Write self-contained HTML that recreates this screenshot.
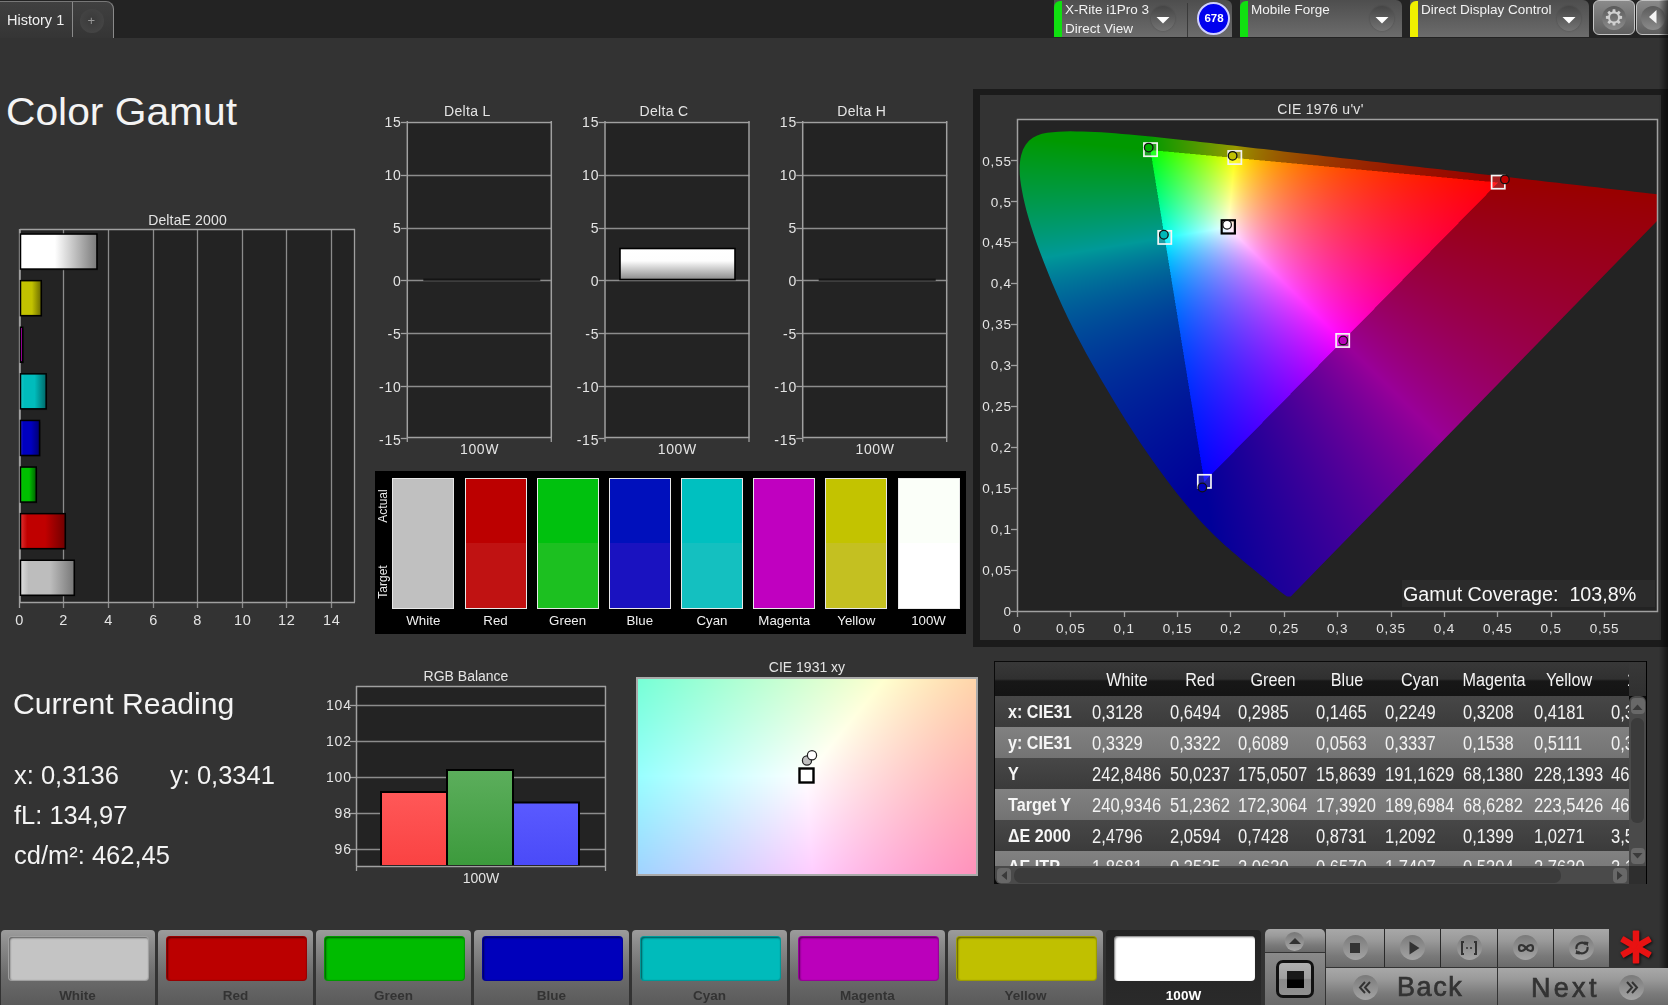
<!DOCTYPE html>
<html><head><meta charset="utf-8">
<style>
*{margin:0;padding:0;box-sizing:border-box}
html,body{width:1668px;height:1005px;overflow:hidden;background:#333;font-family:"Liberation Sans",sans-serif;color:#e8e8e8}
.a{position:absolute}
svg text{font-family:"Liberation Sans",sans-serif}
</style></head><body>
<div class="a" style="left:0;top:0;width:1668px;height:38px;background:#232323"></div>
<div class="a" style="left:6px;top:90px;font-size:39px;color:#f4f4f4;transform:scaleX(1.045);transform-origin:0 0">Color Gamut</div>
<div class="a" style="left:375px;top:470.5px;width:591px;height:163px;background:#000"></div>
<div class="a" style="left:973px;top:89px;width:695px;height:558px;background:#1b1b1b"></div>
<div class="a" style="left:980px;top:95px;width:681px;height:545px;background:#333"></div>
<div class="a" style="left:1018px;top:120px;width:639px;height:491px;background:#232323"></div>
<div class="a" style="left:636px;top:677px;width:342px;height:199px;background:#aaa"></div>
<svg id="fb1" class="a" style="left:0;top:0" width="1668" height="640"><defs><linearGradient id="fbv" x1="0" y1="0" x2="0" y2="1"><stop offset="0" stop-color="#009a10"/><stop offset="0.25" stop-color="#009a60"/><stop offset="0.55" stop-color="#004a9a"/><stop offset="1" stop-color="#2000a0"/></linearGradient><linearGradient id="fbh" x1="0" y1="0" x2="1" y2="0"><stop offset="0.4" stop-color="#a00090" stop-opacity="0"/><stop offset="0.7" stop-color="#9a0090" stop-opacity="0.8"/><stop offset="1" stop-color="#a00010"/></linearGradient><radialGradient id="fbw" gradientUnits="userSpaceOnUse" cx="1228.2" cy="227.3" r="330"><stop offset="0" stop-color="#fff"/><stop offset="1" stop-color="#fff" stop-opacity="0"/></radialGradient><linearGradient id="fbt" gradientUnits="userSpaceOnUse" x1="1150.4" y1="150.1" x2="1498.1" y2="182.5"><stop offset="0" stop-color="#00ff30"/><stop offset="0.3" stop-color="#ffff00"/><stop offset="1" stop-color="#ff0010"/></linearGradient><linearGradient id="fbb" gradientUnits="userSpaceOnUse" x1="1228.2" y1="227.3" x2="1204.3" y2="481.8"><stop offset="0" stop-color="#ff00ff" stop-opacity="0"/><stop offset="1" stop-color="#1010ff"/></linearGradient></defs><polygon points="1291.2,597.7 1286.7,597.6 1282.8,595.0 1279.7,592.7 1276.7,590.3 1273.2,587.3 1269.0,583.9 1266.0,581.3 1262.7,578.5 1258.9,575.4 1254.7,571.9 1250.1,568.2 1245.1,564.1 1239.8,559.6 1234.0,554.7 1230.9,552.1 1227.7,549.2 1224.3,546.3 1220.9,543.1 1217.4,539.8 1213.6,536.3 1209.9,532.6 1205.9,528.6 1201.8,524.2 1197.4,519.5 1192.7,514.1 1187.6,508.2 1182.2,501.8 1176.7,494.9 1170.8,487.4 1164.8,479.5 1158.8,471.3 1152.5,462.5 1146.0,453.3 1139.4,443.6 1132.7,433.4 1125.9,422.8 1119.1,411.8 1112.2,400.6 1105.4,389.2 1098.6,377.6 1091.8,365.8 1085.2,354.0 1078.8,342.1 1072.6,330.3 1066.9,318.5 1061.4,306.9 1056.3,295.6 1051.5,284.5 1047.1,273.7 1042.9,263.3 1039.1,253.3 1035.6,243.7 1032.5,234.6 1029.7,226.1 1027.2,217.9 1025.1,210.4 1023.4,203.3 1021.9,196.8 1020.7,190.6 1019.8,184.8 1019.0,179.6 1018.6,174.7 1018.5,170.1 1018.5,165.9 1018.8,161.9 1019.2,158.3 1020.0,155.0 1021.9,149.0 1024.7,144.0 1028.1,139.9 1032.2,136.7 1036.7,134.4 1041.7,132.7 1047.0,131.6 1052.5,131.0 1058.4,130.5 1064.4,130.3 1070.5,130.1 1076.5,130.2 1082.5,130.3 1088.7,130.5 1095.1,130.7 1101.5,131.1 1108.3,131.5 1115.1,132.0 1122.3,132.7 1129.6,133.3 1137.3,134.0 1145.3,134.8 1153.5,135.6 1157.8,136.1 1162.2,136.5 1166.6,137.0 1171.1,137.5 1175.7,138.0 1180.4,138.5 1185.2,139.1 1190.1,139.6 1195.2,140.1 1200.3,140.7 1205.5,141.3 1210.9,141.9 1216.3,142.5 1221.9,143.2 1227.5,143.8 1233.3,144.4 1239.1,145.1 1245.1,145.8 1251.2,146.5 1257.4,147.2 1263.8,147.9 1270.2,148.7 1276.7,149.4 1283.4,150.2 1290.2,151.0 1297.0,151.8 1304.1,152.5 1311.1,153.3 1318.2,154.2 1325.5,155.1 1332.9,155.9 1340.3,156.7 1347.8,157.6 1355.5,158.4 1363.1,159.3 1370.9,160.2 1378.7,161.1 1386.5,162.0 1394.4,162.9 1402.2,163.8 1409.9,164.7 1417.6,165.6 1425.2,166.5 1432.8,167.4 1440.3,168.2 1447.7,169.1 1455.2,169.9 1462.7,170.8 1470.0,171.6 1477.4,172.4 1484.6,173.3 1491.5,174.1 1498.3,174.8 1505.0,175.6 1511.5,176.4 1517.8,177.0 1524.0,177.8 1530.0,178.5 1535.9,179.2 1541.7,179.8 1547.2,180.5 1552.6,181.1 1557.8,181.6 1562.8,182.2 1567.6,182.8 1572.3,183.3 1576.8,183.8 1581.2,184.3 1589.5,185.3 1597.2,186.1 1604.3,187.0 1611.1,187.8 1617.5,188.5 1623.6,189.2 1629.2,189.8 1634.4,190.5 1639.4,191.1 1643.9,191.5 1650.0,192.3 1655.0,192.9 1659.4,193.3 1664.3,193.9 1669.0,194.4 1673.7,195.0 1678.0,195.5 1682.3,196.0" fill="url(#fbv)"/><polygon points="1291.2,597.7 1286.7,597.6 1282.8,595.0 1279.7,592.7 1276.7,590.3 1273.2,587.3 1269.0,583.9 1266.0,581.3 1262.7,578.5 1258.9,575.4 1254.7,571.9 1250.1,568.2 1245.1,564.1 1239.8,559.6 1234.0,554.7 1230.9,552.1 1227.7,549.2 1224.3,546.3 1220.9,543.1 1217.4,539.8 1213.6,536.3 1209.9,532.6 1205.9,528.6 1201.8,524.2 1197.4,519.5 1192.7,514.1 1187.6,508.2 1182.2,501.8 1176.7,494.9 1170.8,487.4 1164.8,479.5 1158.8,471.3 1152.5,462.5 1146.0,453.3 1139.4,443.6 1132.7,433.4 1125.9,422.8 1119.1,411.8 1112.2,400.6 1105.4,389.2 1098.6,377.6 1091.8,365.8 1085.2,354.0 1078.8,342.1 1072.6,330.3 1066.9,318.5 1061.4,306.9 1056.3,295.6 1051.5,284.5 1047.1,273.7 1042.9,263.3 1039.1,253.3 1035.6,243.7 1032.5,234.6 1029.7,226.1 1027.2,217.9 1025.1,210.4 1023.4,203.3 1021.9,196.8 1020.7,190.6 1019.8,184.8 1019.0,179.6 1018.6,174.7 1018.5,170.1 1018.5,165.9 1018.8,161.9 1019.2,158.3 1020.0,155.0 1021.9,149.0 1024.7,144.0 1028.1,139.9 1032.2,136.7 1036.7,134.4 1041.7,132.7 1047.0,131.6 1052.5,131.0 1058.4,130.5 1064.4,130.3 1070.5,130.1 1076.5,130.2 1082.5,130.3 1088.7,130.5 1095.1,130.7 1101.5,131.1 1108.3,131.5 1115.1,132.0 1122.3,132.7 1129.6,133.3 1137.3,134.0 1145.3,134.8 1153.5,135.6 1157.8,136.1 1162.2,136.5 1166.6,137.0 1171.1,137.5 1175.7,138.0 1180.4,138.5 1185.2,139.1 1190.1,139.6 1195.2,140.1 1200.3,140.7 1205.5,141.3 1210.9,141.9 1216.3,142.5 1221.9,143.2 1227.5,143.8 1233.3,144.4 1239.1,145.1 1245.1,145.8 1251.2,146.5 1257.4,147.2 1263.8,147.9 1270.2,148.7 1276.7,149.4 1283.4,150.2 1290.2,151.0 1297.0,151.8 1304.1,152.5 1311.1,153.3 1318.2,154.2 1325.5,155.1 1332.9,155.9 1340.3,156.7 1347.8,157.6 1355.5,158.4 1363.1,159.3 1370.9,160.2 1378.7,161.1 1386.5,162.0 1394.4,162.9 1402.2,163.8 1409.9,164.7 1417.6,165.6 1425.2,166.5 1432.8,167.4 1440.3,168.2 1447.7,169.1 1455.2,169.9 1462.7,170.8 1470.0,171.6 1477.4,172.4 1484.6,173.3 1491.5,174.1 1498.3,174.8 1505.0,175.6 1511.5,176.4 1517.8,177.0 1524.0,177.8 1530.0,178.5 1535.9,179.2 1541.7,179.8 1547.2,180.5 1552.6,181.1 1557.8,181.6 1562.8,182.2 1567.6,182.8 1572.3,183.3 1576.8,183.8 1581.2,184.3 1589.5,185.3 1597.2,186.1 1604.3,187.0 1611.1,187.8 1617.5,188.5 1623.6,189.2 1629.2,189.8 1634.4,190.5 1639.4,191.1 1643.9,191.5 1650.0,192.3 1655.0,192.9 1659.4,193.3 1664.3,193.9 1669.0,194.4 1673.7,195.0 1678.0,195.5 1682.3,196.0" fill="url(#fbh)"/><polygon points="1498.1,182.5 1150.4,150.1 1204.3,481.8" fill="url(#fbt)"/><polygon points="1498.1,182.5 1150.4,150.1 1204.3,481.8" fill="url(#fbb)"/><polygon points="1498.1,182.5 1150.4,150.1 1204.3,481.8" fill="url(#fbw)"/></svg><div class="a" style="left:638px;top:679px;width:338px;height:195px;background:linear-gradient(135deg,#80ffc8 0%,#e8fff8 45%,#ffe8f0 60%,#ff90c0 100%)"></div><div class="a" style="left:638px;top:679px;width:338px;height:195px;background:linear-gradient(45deg,rgba(168,200,255,.9) 0%,rgba(255,255,255,0) 45%,rgba(255,255,255,0) 60%,rgba(255,230,170,.9) 100%)"></div>

<canvas id="cie" class="a" style="left:1018px;top:120px" width="639" height="491"></canvas>
<script>
(function(){
var L=[[1290.78, 596.56], [1287.01, 596.45], [1283.5, 594.07], [1280.45, 591.73], [1277.48, 589.37], [1273.97, 586.42], [1269.82, 582.99], [1266.83, 580.37], [1263.5, 577.56], [1259.66, 574.45], [1255.5, 571.01], [1250.9, 567.23], [1245.89, 563.14], [1240.56, 558.72], [1234.8, 553.8], [1231.72, 551.19], [1228.52, 548.32], [1225.11, 545.38], [1221.71, 542.2], [1218.19, 538.92], [1214.47, 535.41], [1210.75, 531.73], [1206.81, 527.73], [1202.66, 523.4], [1198.3, 518.66], [1193.61, 513.35], [1188.5, 507.46], [1183.18, 501.08], [1177.64, 494.13], [1171.78, 486.68], [1165.81, 478.82], [1159.73, 470.55], [1153.44, 461.79], [1146.94, 452.62], [1140.44, 442.97], [1133.72, 432.73], [1126.9, 422.17], [1120.08, 411.2], [1113.25, 399.97], [1106.42, 388.59], [1099.59, 376.95], [1092.88, 365.24], [1086.26, 353.45], [1079.87, 341.58], [1073.69, 329.71], [1067.93, 318.01], [1062.5, 306.39], [1057.38, 295.09], [1052.59, 284.05], [1048.22, 273.24], [1044.06, 262.84], [1040.22, 252.85], [1036.71, 243.28], [1033.62, 234.2], [1030.85, 225.7], [1028.4, 217.6], [1026.27, 210.1], [1024.57, 203.07], [1023.09, 196.55], [1021.92, 190.35], [1020.96, 184.64], [1020.22, 179.44], [1019.8, 174.59], [1019.69, 170.13], [1019.69, 165.93], [1020.01, 162.07], [1020.42, 158.54], [1021.15, 155.3], [1023.01, 149.47], [1025.68, 144.67], [1028.94, 140.76], [1032.8, 137.71], [1037.22, 135.51], [1041.98, 133.84], [1047.18, 132.8], [1052.67, 132.16], [1058.49, 131.67], [1064.43, 131.5], [1070.49, 131.34], [1076.44, 131.42], [1082.52, 131.51], [1088.7, 131.67], [1095.08, 131.91], [1101.47, 132.32], [1108.19, 132.73], [1115.01, 133.22], [1122.15, 133.88], [1129.52, 134.53], [1137.2, 135.19], [1145.19, 136.01], [1153.41, 136.83], [1157.68, 137.32], [1162.06, 137.73], [1166.43, 138.22], [1171.02, 138.71], [1175.61, 139.2], [1180.3, 139.7], [1185.11, 140.27], [1190.02, 140.76], [1195.03, 141.34], [1200.16, 141.91], [1205.39, 142.48], [1210.72, 143.06], [1216.16, 143.71], [1221.72, 144.37], [1227.38, 144.94], [1233.13, 145.6], [1239.01, 146.34], [1245.0, 146.99], [1251.07, 147.65], [1257.26, 148.39], [1263.67, 149.12], [1270.07, 149.86], [1276.58, 150.6], [1283.31, 151.42], [1290.04, 152.16], [1296.87, 152.98], [1303.92, 153.71], [1310.96, 154.53], [1318.11, 155.35], [1325.37, 156.26], [1332.74, 157.08], [1340.21, 157.89], [1347.68, 158.8], [1355.37, 159.62], [1362.94, 160.52], [1370.74, 161.42], [1378.53, 162.32], [1386.32, 163.22], [1394.22, 164.13], [1402.02, 165.03], [1409.81, 165.93], [1417.5, 166.75], [1425.07, 167.65], [1432.65, 168.55], [1440.13, 169.37], [1447.6, 170.27], [1455.07, 171.09], [1462.54, 172.0], [1469.91, 172.82], [1477.28, 173.64], [1484.43, 174.45], [1491.37, 175.28], [1498.2, 176.01], [1504.81, 176.83], [1511.34, 177.57], [1517.63, 178.23], [1523.81, 178.96], [1529.9, 179.7], [1535.78, 180.36], [1541.54, 181.01], [1547.09, 181.67], [1552.44, 182.24], [1557.66, 182.82], [1562.67, 183.39], [1567.47, 183.96], [1572.18, 184.54], [1576.66, 185.03], [1581.04, 185.52], [1589.37, 186.51], [1597.05, 187.33], [1604.2, 188.15], [1610.92, 188.96], [1617.34, 189.7], [1623.42, 190.36], [1629.07, 191.01], [1634.3, 191.67], [1639.22, 192.25], [1643.81, 192.74], [1649.89, 193.47], [1654.91, 194.05], [1659.28, 194.54], [1664.2, 195.11], [1668.89, 195.61], [1673.58, 196.18], [1677.86, 196.67], [1681.14, 196.37]];
var c=document.getElementById('cie');var ctx=c.getContext('2d');
var W=c.width,H=c.height,OX=1018,OY=120;
var CX0=1017,CY0=611.2,KU=1067.5,KV=819.8;
var off=document.createElement('canvas');off.width=W;off.height=H;
var oc=off.getContext('2d');var img=oc.createImageData(W,H);var d=img.data;
function g(v){v=Math.max(0,Math.min(1,v));return v<=0.0031308?12.92*v:1.055*Math.pow(v,1/2.4)-0.055;}function GAMMA(v){return Math.pow(v,0.9);}
var SS=[0.25,0.75];
for(var py=0;py<H;py++){for(var px=0;px<W;px++){
 var R=0,G2=0,B2=0;
 for(var sy=0;sy<2;sy++){for(var sx=0;sx<2;sx++){
 var u=(OX+px+SS[sx]-CX0)/KU, v=(CY0-(OY+py+SS[sy]))/KV;
 if(v<0.001)v=0.001;
 var den=6*u-16*v+12; var x=9*u/den, y=4*v/den;
 var X=x/y, Y=1, Z=(1-x-y)/y;
 var r= 3.2406*X-1.5372*Y-0.4986*Z;
 var gg=-0.9689*X+1.8758*Y+0.0415*Z;
 var b= 0.0557*X-0.2040*Y+1.0570*Z;
 var inside=(r>=0&&gg>=0&&b>=0);
 r=Math.max(r,0);gg=Math.max(gg,0);b=Math.max(b,0);
 var m=Math.max(r,gg,b)||1; r/=m;gg/=m;b/=m;
 r=GAMMA(r);gg=GAMMA(gg);b=GAMMA(b);
 var f=inside?1:0.6;
 R+=r*f;G2+=gg*f;B2+=b*f;
 }}
 var i=(py*W+px)*4;
 d[i]=R*63.75;d[i+1]=G2*63.75;d[i+2]=B2*63.75;d[i+3]=255;
}}
oc.putImageData(img,0,0);
ctx.beginPath();
for(var k=0;k<L.length;k++){var X=L[k][0]-OX,Y=L[k][1]-OY; if(k==0)ctx.moveTo(X,Y);else ctx.lineTo(X,Y);}
ctx.closePath();ctx.clip();
ctx.drawImage(off,0,0);
var fb=document.getElementById('fb1'); if(fb) fb.style.display='none';
})();
</script>

<canvas id="xy" class="a" style="left:638px;top:679px" width="338" height="195"></canvas>
<script>
(function(){
var c=document.getElementById('xy');var ctx=c.getContext('2d');
var W=c.width,H=c.height;var img=ctx.createImageData(W,H);var d=img.data;
var CXP=806.5-638, CYP=775.5-679, K=3900, KY=2900, wx=0.3127, wy=0.329;
for(var py=0;py<H;py++){for(var px=0;px<W;px++){
 var x=wx+(px+0.5-CXP)/K, y=wy-(py+0.5-CYP)/KY;
 var X=x/y,Y=1,Z=(1-x-y)/y;
 var r= 3.2406*X-1.5372*Y-0.4986*Z, g=-0.9689*X+1.8758*Y+0.0415*Z, b=0.0557*X-0.2040*Y+1.0570*Z;
 r=Math.max(r,0);g=Math.max(g,0);b=Math.max(b,0);var m=Math.max(r,g,b);r/=m;g/=m;b/=m;
 r=Math.pow(r,0.65);g=Math.pow(g,0.65);b=Math.pow(b,0.65);
 var i=(py*W+px)*4;d[i]=r*255;d[i+1]=g*255;d[i+2]=b*255;d[i+3]=255;
}}
ctx.putImageData(img,0,0);
})();
</script>

<svg class="a" style="left:0;top:0" width="1668" height="1005"><defs><linearGradient id="deg0" x1="0" x2="1"><stop offset="0" stop-color="#fff"/><stop offset="0.45" stop-color="#fff"/><stop offset="1" stop-color="#7a7a7a"/></linearGradient><linearGradient id="deg1" x1="0" x2="1"><stop offset="0" stop-color="#c6c600"/><stop offset="0.15" stop-color="#c2c200"/><stop offset="0.55" stop-color="#c2c200"/><stop offset="1" stop-color="#6a6a00"/></linearGradient><linearGradient id="deg2" x1="0" x2="1"><stop offset="0" stop-color="#c000c0"/><stop offset="0.15" stop-color="#c000c0"/><stop offset="0.55" stop-color="#c000c0"/><stop offset="1" stop-color="#600060"/></linearGradient><linearGradient id="deg3" x1="0" x2="1"><stop offset="0" stop-color="#16c8c8"/><stop offset="0.15" stop-color="#00bcbc"/><stop offset="0.55" stop-color="#00bcbc"/><stop offset="1" stop-color="#006868"/></linearGradient><linearGradient id="deg4" x1="0" x2="1"><stop offset="0" stop-color="#2020d0"/><stop offset="0.15" stop-color="#0000c0"/><stop offset="0.55" stop-color="#0000c0"/><stop offset="1" stop-color="#000070"/></linearGradient><linearGradient id="deg5" x1="0" x2="1"><stop offset="0" stop-color="#10c810"/><stop offset="0.15" stop-color="#00c000"/><stop offset="0.55" stop-color="#00c000"/><stop offset="1" stop-color="#006000"/></linearGradient><linearGradient id="deg6" x1="0" x2="1"><stop offset="0" stop-color="#e03030"/><stop offset="0.15" stop-color="#c00000"/><stop offset="0.55" stop-color="#c00000"/><stop offset="1" stop-color="#700000"/></linearGradient><linearGradient id="deg7" x1="0" x2="1"><stop offset="0" stop-color="#dddddd"/><stop offset="0.15" stop-color="#bdbdbd"/><stop offset="0.55" stop-color="#bdbdbd"/><stop offset="1" stop-color="#777777"/></linearGradient><linearGradient id="dcg" x1="0" y1="0" x2="0" y2="1"><stop offset="0" stop-color="#fff"/><stop offset="0.4" stop-color="#fdfdfd"/><stop offset="1" stop-color="#8a8a8a"/></linearGradient><linearGradient id="rb" x1="0" y1="0" x2="0" y2="1"><stop offset="0" stop-color="#ff5858"/><stop offset="1" stop-color="#fa4242"/></linearGradient><linearGradient id="gb" x1="0" y1="0" x2="0" y2="1"><stop offset="0" stop-color="#5cae5c"/><stop offset="1" stop-color="#3c9a3c"/></linearGradient><linearGradient id="bb" x1="0" y1="0" x2="0" y2="1"><stop offset="0" stop-color="#5a5aff"/><stop offset="1" stop-color="#4a4af8"/></linearGradient></defs><text x="187.5" y="225" font-size="14" fill="#e4e4e4" text-anchor="middle" font-weight="normal" letter-spacing="0.15">DeltaE 2000</text>
<rect x="20" y="229.5" width="335" height="372.5" fill="#232323" stroke="none" stroke-width="1" />
<line x1="19.5" y1="229" x2="19.5" y2="608" stroke="#a0a0a0" stroke-width="1.3" />
<text x="19.8" y="624.5" font-size="14.5" fill="#e4e4e4" text-anchor="middle" font-weight="normal" letter-spacing="0.8">0</text>
<line x1="63.5" y1="229" x2="63.5" y2="608" stroke="#8c8c8c" stroke-width="1.3" />
<text x="63.8" y="624.5" font-size="14.5" fill="#e4e4e4" text-anchor="middle" font-weight="normal" letter-spacing="0.8">2</text>
<line x1="108.5" y1="229" x2="108.5" y2="608" stroke="#8c8c8c" stroke-width="1.3" />
<text x="108.8" y="624.5" font-size="14.5" fill="#e4e4e4" text-anchor="middle" font-weight="normal" letter-spacing="0.8">4</text>
<line x1="153.5" y1="229" x2="153.5" y2="608" stroke="#8c8c8c" stroke-width="1.3" />
<text x="153.8" y="624.5" font-size="14.5" fill="#e4e4e4" text-anchor="middle" font-weight="normal" letter-spacing="0.8">6</text>
<line x1="197.5" y1="229" x2="197.5" y2="608" stroke="#8c8c8c" stroke-width="1.3" />
<text x="197.8" y="624.5" font-size="14.5" fill="#e4e4e4" text-anchor="middle" font-weight="normal" letter-spacing="0.8">8</text>
<line x1="242.5" y1="229" x2="242.5" y2="608" stroke="#8c8c8c" stroke-width="1.3" />
<text x="242.8" y="624.5" font-size="14.5" fill="#e4e4e4" text-anchor="middle" font-weight="normal" letter-spacing="0.8">10</text>
<line x1="286.5" y1="229" x2="286.5" y2="608" stroke="#8c8c8c" stroke-width="1.3" />
<text x="286.8" y="624.5" font-size="14.5" fill="#e4e4e4" text-anchor="middle" font-weight="normal" letter-spacing="0.8">12</text>
<line x1="331.5" y1="229" x2="331.5" y2="608" stroke="#8c8c8c" stroke-width="1.3" />
<text x="331.8" y="624.5" font-size="14.5" fill="#e4e4e4" text-anchor="middle" font-weight="normal" letter-spacing="0.8">14</text>
<line x1="20" y1="229.5" x2="355" y2="229.5" stroke="#a0a0a0" stroke-width="1.3" />
<line x1="354.5" y1="229" x2="354.5" y2="602" stroke="#a0a0a0" stroke-width="1.3" />
<line x1="19" y1="602.5" x2="355" y2="602.5" stroke="#a0a0a0" stroke-width="1.5" />
<line x1="20" y1="229" x2="20" y2="602" stroke="#a0a0a0" stroke-width="1.5" />
<rect x="21.5" y="235.3" width="76.45" height="35" fill="#111" stroke="none" stroke-width="1" opacity="0.5"/>
<rect x="20.5" y="234.05" width="76.45" height="35" fill="url(#deg0)" stroke="#000" stroke-width="1.5" />
<rect x="21.5" y="281.90000000000003" width="20.75" height="35" fill="#111" stroke="none" stroke-width="1" opacity="0.5"/>
<rect x="20.5" y="280.65000000000003" width="20.75" height="35" fill="url(#deg1)" stroke="#000" stroke-width="1.5" />
<rect x="21.5" y="328.5" width="2.25" height="35" fill="#111" stroke="none" stroke-width="1" opacity="0.5"/>
<rect x="20.5" y="327.25" width="2.25" height="35" fill="url(#deg2)" stroke="#000" stroke-width="1.5" />
<rect x="21.5" y="375.1" width="25.65" height="35" fill="#111" stroke="none" stroke-width="1" opacity="0.5"/>
<rect x="20.5" y="373.85" width="25.65" height="35" fill="url(#deg3)" stroke="#000" stroke-width="1.5" />
<rect x="21.5" y="421.70000000000005" width="19.049999999999997" height="35" fill="#111" stroke="none" stroke-width="1" opacity="0.5"/>
<rect x="20.5" y="420.45000000000005" width="19.049999999999997" height="35" fill="url(#deg4)" stroke="#000" stroke-width="1.5" />
<rect x="21.5" y="468.3" width="15.75" height="35" fill="#111" stroke="none" stroke-width="1" opacity="0.5"/>
<rect x="20.5" y="467.05" width="15.75" height="35" fill="url(#deg5)" stroke="#000" stroke-width="1.5" />
<rect x="21.5" y="514.9000000000001" width="44.75" height="35" fill="#111" stroke="none" stroke-width="1" opacity="0.5"/>
<rect x="20.5" y="513.6500000000001" width="44.75" height="35" fill="url(#deg6)" stroke="#000" stroke-width="1.5" />
<rect x="21.5" y="561.5" width="53.75" height="35" fill="#111" stroke="none" stroke-width="1" opacity="0.5"/>
<rect x="20.5" y="560.25" width="53.75" height="35" fill="url(#deg7)" stroke="#000" stroke-width="1.5" />
<text x="467.3" y="116" font-size="14" fill="#e4e4e4" text-anchor="middle" font-weight="normal" letter-spacing="0.3">Delta L</text>
<rect x="406.8" y="121.5" width="145" height="316" fill="#232323" stroke="none" stroke-width="1" />
<line x1="406.8" y1="122.5" x2="551.8" y2="122.5" stroke="#a0a0a0" stroke-width="1.4" />
<line x1="400.8" y1="122.5" x2="406.8" y2="122.5" stroke="#a0a0a0" stroke-width="1.3" />
<text x="401.6" y="127.4" font-size="14" fill="#e4e4e4" text-anchor="end" font-weight="normal" letter-spacing="0.8">15</text>
<line x1="406.8" y1="175.5" x2="551.8" y2="175.5" stroke="#8c8c8c" stroke-width="1.4" />
<line x1="400.8" y1="175.5" x2="406.8" y2="175.5" stroke="#a0a0a0" stroke-width="1.3" />
<text x="401.6" y="180.29999999999998" font-size="14" fill="#e4e4e4" text-anchor="end" font-weight="normal" letter-spacing="0.8">10</text>
<line x1="406.8" y1="228.5" x2="551.8" y2="228.5" stroke="#8c8c8c" stroke-width="1.4" />
<line x1="400.8" y1="228.5" x2="406.8" y2="228.5" stroke="#a0a0a0" stroke-width="1.3" />
<text x="401.6" y="233.2" font-size="14" fill="#e4e4e4" text-anchor="end" font-weight="normal" letter-spacing="0.8">5</text>
<line x1="406.8" y1="280.5" x2="551.8" y2="280.5" stroke="#8c8c8c" stroke-width="1.4" />
<line x1="400.8" y1="280.5" x2="406.8" y2="280.5" stroke="#a0a0a0" stroke-width="1.3" />
<text x="401.6" y="286.09999999999997" font-size="14" fill="#e4e4e4" text-anchor="end" font-weight="normal" letter-spacing="0.8">0</text>
<line x1="406.8" y1="333.5" x2="551.8" y2="333.5" stroke="#8c8c8c" stroke-width="1.4" />
<line x1="400.8" y1="333.5" x2="406.8" y2="333.5" stroke="#a0a0a0" stroke-width="1.3" />
<text x="401.6" y="339.0" font-size="14" fill="#e4e4e4" text-anchor="end" font-weight="normal" letter-spacing="0.8">-5</text>
<line x1="406.8" y1="386.5" x2="551.8" y2="386.5" stroke="#8c8c8c" stroke-width="1.4" />
<line x1="400.8" y1="386.5" x2="406.8" y2="386.5" stroke="#a0a0a0" stroke-width="1.3" />
<text x="401.6" y="391.9" font-size="14" fill="#e4e4e4" text-anchor="end" font-weight="normal" letter-spacing="0.8">-10</text>
<line x1="406.8" y1="437.5" x2="551.8" y2="437.5" stroke="#a0a0a0" stroke-width="1.4" />
<line x1="400.8" y1="438.5" x2="406.8" y2="438.5" stroke="#a0a0a0" stroke-width="1.3" />
<text x="401.6" y="444.79999999999995" font-size="14" fill="#e4e4e4" text-anchor="end" font-weight="normal" letter-spacing="0.8">-15</text>
<line x1="407.3" y1="121" x2="407.3" y2="437" stroke="#a0a0a0" stroke-width="1.5" />
<line x1="551.3" y1="121" x2="551.3" y2="437" stroke="#a0a0a0" stroke-width="1.5" />
<line x1="407.3" y1="437" x2="407.3" y2="442" stroke="#a0a0a0" stroke-width="1.3" />
<line x1="551.3" y1="437" x2="551.3" y2="442" stroke="#a0a0a0" stroke-width="1.3" />
<text x="479.6" y="454" font-size="14" fill="#e4e4e4" text-anchor="middle" font-weight="normal" letter-spacing="0.6">100W</text>
<line x1="423.3" y1="279.6" x2="540.3" y2="279.6" stroke="#141414" stroke-width="2.4" />
<text x="664.0" y="116" font-size="14" fill="#e4e4e4" text-anchor="middle" font-weight="normal" letter-spacing="0.3">Delta C</text>
<rect x="604.5" y="121.5" width="145" height="316" fill="#232323" stroke="none" stroke-width="1" />
<line x1="604.5" y1="122.5" x2="749.5" y2="122.5" stroke="#a0a0a0" stroke-width="1.4" />
<line x1="598.5" y1="122.5" x2="604.5" y2="122.5" stroke="#a0a0a0" stroke-width="1.3" />
<text x="599.3" y="127.4" font-size="14" fill="#e4e4e4" text-anchor="end" font-weight="normal" letter-spacing="0.8">15</text>
<line x1="604.5" y1="175.5" x2="749.5" y2="175.5" stroke="#8c8c8c" stroke-width="1.4" />
<line x1="598.5" y1="175.5" x2="604.5" y2="175.5" stroke="#a0a0a0" stroke-width="1.3" />
<text x="599.3" y="180.29999999999998" font-size="14" fill="#e4e4e4" text-anchor="end" font-weight="normal" letter-spacing="0.8">10</text>
<line x1="604.5" y1="228.5" x2="749.5" y2="228.5" stroke="#8c8c8c" stroke-width="1.4" />
<line x1="598.5" y1="228.5" x2="604.5" y2="228.5" stroke="#a0a0a0" stroke-width="1.3" />
<text x="599.3" y="233.2" font-size="14" fill="#e4e4e4" text-anchor="end" font-weight="normal" letter-spacing="0.8">5</text>
<line x1="604.5" y1="280.5" x2="749.5" y2="280.5" stroke="#8c8c8c" stroke-width="1.4" />
<line x1="598.5" y1="280.5" x2="604.5" y2="280.5" stroke="#a0a0a0" stroke-width="1.3" />
<text x="599.3" y="286.09999999999997" font-size="14" fill="#e4e4e4" text-anchor="end" font-weight="normal" letter-spacing="0.8">0</text>
<line x1="604.5" y1="333.5" x2="749.5" y2="333.5" stroke="#8c8c8c" stroke-width="1.4" />
<line x1="598.5" y1="333.5" x2="604.5" y2="333.5" stroke="#a0a0a0" stroke-width="1.3" />
<text x="599.3" y="339.0" font-size="14" fill="#e4e4e4" text-anchor="end" font-weight="normal" letter-spacing="0.8">-5</text>
<line x1="604.5" y1="386.5" x2="749.5" y2="386.5" stroke="#8c8c8c" stroke-width="1.4" />
<line x1="598.5" y1="386.5" x2="604.5" y2="386.5" stroke="#a0a0a0" stroke-width="1.3" />
<text x="599.3" y="391.9" font-size="14" fill="#e4e4e4" text-anchor="end" font-weight="normal" letter-spacing="0.8">-10</text>
<line x1="604.5" y1="437.5" x2="749.5" y2="437.5" stroke="#a0a0a0" stroke-width="1.4" />
<line x1="598.5" y1="438.5" x2="604.5" y2="438.5" stroke="#a0a0a0" stroke-width="1.3" />
<text x="599.3" y="444.79999999999995" font-size="14" fill="#e4e4e4" text-anchor="end" font-weight="normal" letter-spacing="0.8">-15</text>
<line x1="605.0" y1="121" x2="605.0" y2="437" stroke="#a0a0a0" stroke-width="1.5" />
<line x1="749.0" y1="121" x2="749.0" y2="437" stroke="#a0a0a0" stroke-width="1.5" />
<line x1="605.0" y1="437" x2="605.0" y2="442" stroke="#a0a0a0" stroke-width="1.3" />
<line x1="749.0" y1="437" x2="749.0" y2="442" stroke="#a0a0a0" stroke-width="1.3" />
<text x="677.3" y="454" font-size="14" fill="#e4e4e4" text-anchor="middle" font-weight="normal" letter-spacing="0.6">100W</text>
<rect x="620.0" y="248.5" width="115" height="31" fill="url(#dcg)" stroke="#000" stroke-width="1.6" />
<text x="861.7" y="116" font-size="14" fill="#e4e4e4" text-anchor="middle" font-weight="normal" letter-spacing="0.3">Delta H</text>
<rect x="802.2" y="121.5" width="145" height="316" fill="#232323" stroke="none" stroke-width="1" />
<line x1="802.2" y1="122.5" x2="947.2" y2="122.5" stroke="#a0a0a0" stroke-width="1.4" />
<line x1="796.2" y1="122.5" x2="802.2" y2="122.5" stroke="#a0a0a0" stroke-width="1.3" />
<text x="797.0" y="127.4" font-size="14" fill="#e4e4e4" text-anchor="end" font-weight="normal" letter-spacing="0.8">15</text>
<line x1="802.2" y1="175.5" x2="947.2" y2="175.5" stroke="#8c8c8c" stroke-width="1.4" />
<line x1="796.2" y1="175.5" x2="802.2" y2="175.5" stroke="#a0a0a0" stroke-width="1.3" />
<text x="797.0" y="180.29999999999998" font-size="14" fill="#e4e4e4" text-anchor="end" font-weight="normal" letter-spacing="0.8">10</text>
<line x1="802.2" y1="228.5" x2="947.2" y2="228.5" stroke="#8c8c8c" stroke-width="1.4" />
<line x1="796.2" y1="228.5" x2="802.2" y2="228.5" stroke="#a0a0a0" stroke-width="1.3" />
<text x="797.0" y="233.2" font-size="14" fill="#e4e4e4" text-anchor="end" font-weight="normal" letter-spacing="0.8">5</text>
<line x1="802.2" y1="280.5" x2="947.2" y2="280.5" stroke="#8c8c8c" stroke-width="1.4" />
<line x1="796.2" y1="280.5" x2="802.2" y2="280.5" stroke="#a0a0a0" stroke-width="1.3" />
<text x="797.0" y="286.09999999999997" font-size="14" fill="#e4e4e4" text-anchor="end" font-weight="normal" letter-spacing="0.8">0</text>
<line x1="802.2" y1="333.5" x2="947.2" y2="333.5" stroke="#8c8c8c" stroke-width="1.4" />
<line x1="796.2" y1="333.5" x2="802.2" y2="333.5" stroke="#a0a0a0" stroke-width="1.3" />
<text x="797.0" y="339.0" font-size="14" fill="#e4e4e4" text-anchor="end" font-weight="normal" letter-spacing="0.8">-5</text>
<line x1="802.2" y1="386.5" x2="947.2" y2="386.5" stroke="#8c8c8c" stroke-width="1.4" />
<line x1="796.2" y1="386.5" x2="802.2" y2="386.5" stroke="#a0a0a0" stroke-width="1.3" />
<text x="797.0" y="391.9" font-size="14" fill="#e4e4e4" text-anchor="end" font-weight="normal" letter-spacing="0.8">-10</text>
<line x1="802.2" y1="437.5" x2="947.2" y2="437.5" stroke="#a0a0a0" stroke-width="1.4" />
<line x1="796.2" y1="438.5" x2="802.2" y2="438.5" stroke="#a0a0a0" stroke-width="1.3" />
<text x="797.0" y="444.79999999999995" font-size="14" fill="#e4e4e4" text-anchor="end" font-weight="normal" letter-spacing="0.8">-15</text>
<line x1="802.7" y1="121" x2="802.7" y2="437" stroke="#a0a0a0" stroke-width="1.5" />
<line x1="946.7" y1="121" x2="946.7" y2="437" stroke="#a0a0a0" stroke-width="1.5" />
<line x1="802.7" y1="437" x2="802.7" y2="442" stroke="#a0a0a0" stroke-width="1.3" />
<line x1="946.7" y1="437" x2="946.7" y2="442" stroke="#a0a0a0" stroke-width="1.3" />
<text x="875.0" y="454" font-size="14" fill="#e4e4e4" text-anchor="middle" font-weight="normal" letter-spacing="0.6">100W</text>
<line x1="818.7" y1="279.6" x2="935.7" y2="279.6" stroke="#141414" stroke-width="2.4" />
<text x="466" y="681" font-size="14" fill="#e4e4e4" text-anchor="middle" font-weight="normal" >RGB Balance</text>
<rect x="356.5" y="686" width="250" height="180" fill="#232323" stroke="none" stroke-width="1" />
<line x1="356" y1="705.5" x2="606" y2="705.5" stroke="#8c8c8c" stroke-width="1.3" />
<line x1="350" y1="705.5" x2="356" y2="705.5" stroke="#a0a0a0" stroke-width="1.3" />
<text x="351.8" y="710.0999999999999" font-size="14" fill="#e4e4e4" text-anchor="end" font-weight="normal" letter-spacing="0.8">104</text>
<line x1="356" y1="741.5" x2="606" y2="741.5" stroke="#8c8c8c" stroke-width="1.3" />
<line x1="350" y1="741.5" x2="356" y2="741.5" stroke="#a0a0a0" stroke-width="1.3" />
<text x="351.8" y="746.1599999999999" font-size="14" fill="#e4e4e4" text-anchor="end" font-weight="normal" letter-spacing="0.8">102</text>
<line x1="356" y1="777.5" x2="606" y2="777.5" stroke="#8c8c8c" stroke-width="1.3" />
<line x1="350" y1="777.5" x2="356" y2="777.5" stroke="#a0a0a0" stroke-width="1.3" />
<text x="351.8" y="782.2199999999999" font-size="14" fill="#e4e4e4" text-anchor="end" font-weight="normal" letter-spacing="0.8">100</text>
<line x1="356" y1="813.5" x2="606" y2="813.5" stroke="#8c8c8c" stroke-width="1.3" />
<line x1="350" y1="813.5" x2="356" y2="813.5" stroke="#a0a0a0" stroke-width="1.3" />
<text x="351.8" y="818.28" font-size="14" fill="#e4e4e4" text-anchor="end" font-weight="normal" letter-spacing="0.8">98</text>
<line x1="356" y1="849.5" x2="606" y2="849.5" stroke="#8c8c8c" stroke-width="1.3" />
<line x1="350" y1="849.5" x2="356" y2="849.5" stroke="#a0a0a0" stroke-width="1.3" />
<text x="351.8" y="854.3399999999999" font-size="14" fill="#e4e4e4" text-anchor="end" font-weight="normal" letter-spacing="0.8">96</text>
<line x1="356" y1="686.5" x2="606" y2="686.5" stroke="#a0a0a0" stroke-width="1.3" />
<line x1="356.5" y1="686" x2="356.5" y2="866" stroke="#a0a0a0" stroke-width="1.5" />
<line x1="605.5" y1="686" x2="605.5" y2="866" stroke="#a0a0a0" stroke-width="1.5" />
<rect x="381" y="792" width="66" height="74" fill="url(#rb)" stroke="#000" stroke-width="2" />
<rect x="447" y="770" width="66" height="96" fill="url(#gb)" stroke="#000" stroke-width="2" />
<rect x="513" y="802.5" width="66" height="63.5" fill="url(#bb)" stroke="#000" stroke-width="2" />
<line x1="356" y1="866.5" x2="606" y2="866.5" stroke="#a0a0a0" stroke-width="1.5" />
<line x1="356.5" y1="866" x2="356.5" y2="871" stroke="#a0a0a0" stroke-width="1.3" />
<line x1="605.5" y1="866" x2="605.5" y2="871" stroke="#a0a0a0" stroke-width="1.3" />
<text x="481" y="883" font-size="14" fill="#e4e4e4" text-anchor="middle" font-weight="normal" >100W</text>
<text x="807" y="672" font-size="14" fill="#e4e4e4" text-anchor="middle" font-weight="normal" >CIE 1931 xy</text>
<text x="1320.5" y="114" font-size="14" fill="#e4e4e4" text-anchor="middle" font-weight="normal" letter-spacing="0.3">CIE 1976 u'v'</text>
<line x1="1011" y1="611.5" x2="1017" y2="611.5" stroke="#a0a0a0" stroke-width="1.3" />
<text x="1011.8" y="616.4000000000001" font-size="13.5" fill="#e4e4e4" text-anchor="end" font-weight="normal" letter-spacing="0.8">0</text>
<line x1="1011" y1="570.5" x2="1017" y2="570.5" stroke="#a0a0a0" stroke-width="1.3" />
<text x="1011.8" y="575.4100000000001" font-size="13.5" fill="#e4e4e4" text-anchor="end" font-weight="normal" letter-spacing="0.8">0,05</text>
<line x1="1011" y1="529.5" x2="1017" y2="529.5" stroke="#a0a0a0" stroke-width="1.3" />
<text x="1011.8" y="534.4200000000001" font-size="13.5" fill="#e4e4e4" text-anchor="end" font-weight="normal" letter-spacing="0.8">0,1</text>
<line x1="1011" y1="488.5" x2="1017" y2="488.5" stroke="#a0a0a0" stroke-width="1.3" />
<text x="1011.8" y="493.43" font-size="13.5" fill="#e4e4e4" text-anchor="end" font-weight="normal" letter-spacing="0.8">0,15</text>
<line x1="1011" y1="447.5" x2="1017" y2="447.5" stroke="#a0a0a0" stroke-width="1.3" />
<text x="1011.8" y="452.44" font-size="13.5" fill="#e4e4e4" text-anchor="end" font-weight="normal" letter-spacing="0.8">0,2</text>
<line x1="1011" y1="406.5" x2="1017" y2="406.5" stroke="#a0a0a0" stroke-width="1.3" />
<text x="1011.8" y="411.45000000000005" font-size="13.5" fill="#e4e4e4" text-anchor="end" font-weight="normal" letter-spacing="0.8">0,25</text>
<line x1="1011" y1="365.5" x2="1017" y2="365.5" stroke="#a0a0a0" stroke-width="1.3" />
<text x="1011.8" y="370.46" font-size="13.5" fill="#e4e4e4" text-anchor="end" font-weight="normal" letter-spacing="0.8">0,3</text>
<line x1="1011" y1="324.5" x2="1017" y2="324.5" stroke="#a0a0a0" stroke-width="1.3" />
<text x="1011.8" y="329.47" font-size="13.5" fill="#e4e4e4" text-anchor="end" font-weight="normal" letter-spacing="0.8">0,35</text>
<line x1="1011" y1="283.5" x2="1017" y2="283.5" stroke="#a0a0a0" stroke-width="1.3" />
<text x="1011.8" y="288.48" font-size="13.5" fill="#e4e4e4" text-anchor="end" font-weight="normal" letter-spacing="0.8">0,4</text>
<line x1="1011" y1="242.5" x2="1017" y2="242.5" stroke="#a0a0a0" stroke-width="1.3" />
<text x="1011.8" y="247.49000000000007" font-size="13.5" fill="#e4e4e4" text-anchor="end" font-weight="normal" letter-spacing="0.8">0,45</text>
<line x1="1011" y1="201.5" x2="1017" y2="201.5" stroke="#a0a0a0" stroke-width="1.3" />
<text x="1011.8" y="206.50000000000006" font-size="13.5" fill="#e4e4e4" text-anchor="end" font-weight="normal" letter-spacing="0.8">0,5</text>
<line x1="1011" y1="160.5" x2="1017" y2="160.5" stroke="#a0a0a0" stroke-width="1.3" />
<text x="1011.8" y="165.51000000000005" font-size="13.5" fill="#e4e4e4" text-anchor="end" font-weight="normal" letter-spacing="0.8">0,55</text>
<line x1="1017.5" y1="611" x2="1017.5" y2="617" stroke="#a0a0a0" stroke-width="1.3" />
<text x="1017.4" y="633" font-size="13.5" fill="#e4e4e4" text-anchor="middle" font-weight="normal" letter-spacing="0.8">0</text>
<line x1="1070.5" y1="611" x2="1070.5" y2="617" stroke="#a0a0a0" stroke-width="1.3" />
<text x="1070.775" y="633" font-size="13.5" fill="#e4e4e4" text-anchor="middle" font-weight="normal" letter-spacing="0.8">0,05</text>
<line x1="1124.5" y1="611" x2="1124.5" y2="617" stroke="#a0a0a0" stroke-width="1.3" />
<text x="1124.15" y="633" font-size="13.5" fill="#e4e4e4" text-anchor="middle" font-weight="normal" letter-spacing="0.8">0,1</text>
<line x1="1177.5" y1="611" x2="1177.5" y2="617" stroke="#a0a0a0" stroke-width="1.3" />
<text x="1177.525" y="633" font-size="13.5" fill="#e4e4e4" text-anchor="middle" font-weight="normal" letter-spacing="0.8">0,15</text>
<line x1="1230.5" y1="611" x2="1230.5" y2="617" stroke="#a0a0a0" stroke-width="1.3" />
<text x="1230.9" y="633" font-size="13.5" fill="#e4e4e4" text-anchor="middle" font-weight="normal" letter-spacing="0.8">0,2</text>
<line x1="1284.5" y1="611" x2="1284.5" y2="617" stroke="#a0a0a0" stroke-width="1.3" />
<text x="1284.275" y="633" font-size="13.5" fill="#e4e4e4" text-anchor="middle" font-weight="normal" letter-spacing="0.8">0,25</text>
<line x1="1337.5" y1="611" x2="1337.5" y2="617" stroke="#a0a0a0" stroke-width="1.3" />
<text x="1337.65" y="633" font-size="13.5" fill="#e4e4e4" text-anchor="middle" font-weight="normal" letter-spacing="0.8">0,3</text>
<line x1="1391.5" y1="611" x2="1391.5" y2="617" stroke="#a0a0a0" stroke-width="1.3" />
<text x="1391.025" y="633" font-size="13.5" fill="#e4e4e4" text-anchor="middle" font-weight="normal" letter-spacing="0.8">0,35</text>
<line x1="1444.5" y1="611" x2="1444.5" y2="617" stroke="#a0a0a0" stroke-width="1.3" />
<text x="1444.4" y="633" font-size="13.5" fill="#e4e4e4" text-anchor="middle" font-weight="normal" letter-spacing="0.8">0,4</text>
<line x1="1497.5" y1="611" x2="1497.5" y2="617" stroke="#a0a0a0" stroke-width="1.3" />
<text x="1497.775" y="633" font-size="13.5" fill="#e4e4e4" text-anchor="middle" font-weight="normal" letter-spacing="0.8">0,45</text>
<line x1="1551.5" y1="611" x2="1551.5" y2="617" stroke="#a0a0a0" stroke-width="1.3" />
<text x="1551.15" y="633" font-size="13.5" fill="#e4e4e4" text-anchor="middle" font-weight="normal" letter-spacing="0.8">0,5</text>
<line x1="1604.5" y1="611" x2="1604.5" y2="617" stroke="#a0a0a0" stroke-width="1.3" />
<text x="1604.525" y="633" font-size="13.5" fill="#e4e4e4" text-anchor="middle" font-weight="normal" letter-spacing="0.8">0,55</text>
<rect x="1017.5" y="119.5" width="640" height="492" fill="none" stroke="#a0a0a0" stroke-width="1.5" />
<rect x="1491.6267605633802" y="175.53697183098598" width="13.2" height="13.2" fill="rgba(255,255,255,0.12)" stroke="#f4f4f4" stroke-width="1.7" />
<rect x="1143.9375" y="143.06250000000006" width="13.2" height="13.2" fill="rgba(255,255,255,0.12)" stroke="#f4f4f4" stroke-width="1.7" />
<rect x="1197.780701754386" y="474.7578947368421" width="13.2" height="13.2" fill="rgba(255,255,255,0.12)" stroke="#f4f4f4" stroke-width="1.7" />
<rect x="1158.1539598472718" y="230.81437061214444" width="13.2" height="13.2" fill="rgba(255,255,255,0.12)" stroke="#f4f4f4" stroke-width="1.7" />
<rect x="1336.0816661122462" y="333.86819369861723" width="13.2" height="13.2" fill="rgba(255,255,255,0.12)" stroke="#f4f4f4" stroke-width="1.7" />
<rect x="1228.1791489361701" y="150.92286200607913" width="13.2" height="13.2" fill="rgba(255,255,255,0.12)" stroke="#f4f4f4" stroke-width="1.7" />
<rect x="1221.6835320912282" y="220.2712681491792" width="13.2" height="13.2" fill="none" stroke="#000" stroke-width="2.2" />
<circle cx="1504.9" cy="179.4" r="4.3" fill="#c00000" stroke="#111" stroke-width="1.25"/>
<circle cx="1148.7" cy="147.6" r="4.3" fill="#00b000" stroke="#111" stroke-width="1.25"/>
<circle cx="1202.3" cy="487.5" r="4.3" fill="#0000c0" stroke="#111" stroke-width="1.25"/>
<circle cx="1163.9" cy="234.7" r="4.3" fill="#00b8b8" stroke="#111" stroke-width="1.25"/>
<circle cx="1343.2" cy="340.4" r="4.3" fill="#b800b8" stroke="#111" stroke-width="1.25"/>
<circle cx="1232.6" cy="155.8" r="4.3" fill="#c0c000" stroke="#111" stroke-width="1.25"/>
<circle cx="1227.1" cy="224.7" r="4.3" fill="#ffffff" stroke="#111" stroke-width="1.25"/></svg>
<div class="a" style="left:392.3px;top:478px;width:62px;height:131px;border:1px solid #e8e8e8;background:linear-gradient(#c0c0c0 0,#c0c0c0 50%,#c0c0c0 50%,#c0c0c0 100%)"></div><div class="a" style="left:464.5px;top:478px;width:62px;height:131px;border:1px solid #e8e8e8;background:linear-gradient(#bc0000 0,#bc0000 50%,#c01212 50%,#c01212 100%)"></div><div class="a" style="left:536.6px;top:478px;width:62px;height:131px;border:1px solid #e8e8e8;background:linear-gradient(#00c10e 0,#00c10e 50%,#1cc020 50%,#1cc020 100%)"></div><div class="a" style="left:608.8px;top:478px;width:62px;height:131px;border:1px solid #e8e8e8;background:linear-gradient(#0010bc 0,#0010bc 50%,#1a12c0 50%,#1a12c0 100%)"></div><div class="a" style="left:681.0px;top:478px;width:62px;height:131px;border:1px solid #e8e8e8;background:linear-gradient(#00c0c0 0,#00c0c0 50%,#14c0c0 50%,#14c0c0 100%)"></div><div class="a" style="left:753.2px;top:478px;width:62px;height:131px;border:1px solid #e8e8e8;background:linear-gradient(#c000c0 0,#c000c0 50%,#c000c0 50%,#c000c0 100%)"></div><div class="a" style="left:825.3px;top:478px;width:62px;height:131px;border:1px solid #e8e8e8;background:linear-gradient(#c3c300 0,#c3c300 50%,#c4c021 50%,#c4c021 100%)"></div><div class="a" style="left:897.5px;top:478px;width:62px;height:131px;border:1px solid #e8e8e8;background:linear-gradient(#fbfff9 0,#fbfff9 50%,#ffffff 50%,#ffffff 100%)"></div><div class="a" style="left:12.5px;top:688px;white-space:nowrap;font-size:29px;color:#f4f4f4;transform:scaleX(1.04);transform-origin:0 0">Current Reading</div><div class="a" style="left:14px;top:761px;white-space:nowrap;font-size:25.5px;color:#f4f4f4">x: 0,3136</div><div class="a" style="left:170px;top:761px;white-space:nowrap;font-size:25.5px;color:#f4f4f4">y: 0,3341</div><div class="a" style="left:14px;top:801px;white-space:nowrap;font-size:25.5px;color:#f4f4f4">fL: 134,97</div><div class="a" style="left:14px;top:841px;white-space:nowrap;font-size:25.5px;color:#f4f4f4">cd/m²: 462,45</div><div class="a" style="left:1402px;top:580px;width:253px;height:27px;background:#2b2b2b"></div><div class="a" style="left:1402.5px;top:582.5px;white-space:nowrap;font-size:19.5px;color:#f8f8f8;transform:scaleX(1.01);transform-origin:0 0">Gamut Coverage:&nbsp;&nbsp;103,8%</div><div class="a" style="left:994px;top:661px;width:652px;height:223px;background:#0a0a0a"></div><div class="a" style="left:995px;top:662px;width:651px;height:34px;background:linear-gradient(#383838 0,#303030 50%,#171717 56%,#141414 100%)"></div><div class="a" style="left:995px;top:662px;width:634px;height:204px;overflow:hidden"><div class="a" style="left:0px;top:0px;width:634px;height:34px;background:linear-gradient(#383838 0,#303030 50%,#171717 56%,#141414 100%)"></div><div class="a" style="left:82.40000000000009px;top:8px;width:100px;text-align:center;font-size:18px;color:#f4f4f4;transform:scaleX(0.9)">White</div><div class="a" style="left:155.20000000000005px;top:8px;width:100px;text-align:center;font-size:18px;color:#f4f4f4;transform:scaleX(0.9)">Red</div><div class="a" style="left:228.29999999999995px;top:8px;width:100px;text-align:center;font-size:18px;color:#f4f4f4;transform:scaleX(0.9)">Green</div><div class="a" style="left:301.5px;top:8px;width:100px;text-align:center;font-size:18px;color:#f4f4f4;transform:scaleX(0.9)">Blue</div><div class="a" style="left:374.70000000000005px;top:8px;width:100px;text-align:center;font-size:18px;color:#f4f4f4;transform:scaleX(0.9)">Cyan</div><div class="a" style="left:449px;top:8px;width:100px;text-align:center;font-size:18px;color:#f4f4f4;transform:scaleX(0.9)">Magenta</div><div class="a" style="left:523.5px;top:8px;width:100px;text-align:center;font-size:18px;color:#f4f4f4;transform:scaleX(0.9)">Yellow</div><div class="a" style="left:603px;top:8px;width:100px;text-align:center;font-size:18px;color:#f4f4f4;transform:scaleX(0.9)">100W</div><div class="a" style="left:0px;top:34px;width:634px;height:31px;background:linear-gradient(#474747,#3b3b3b)"></div><div class="a" style="left:13px;top:39px;white-space:nowrap;font-size:19px;font-weight:bold;color:#f6f6f6;transform:scaleX(0.85);transform-origin:0 0">x: CIE31</div><div class="a" style="left:97.40000000000009px;top:39px;white-space:nowrap;font-size:19.5px;color:#f2f2f2;transform:scaleX(0.85);transform-origin:0 0">0,3128</div><div class="a" style="left:175px;top:39px;white-space:nowrap;font-size:19.5px;color:#f2f2f2;transform:scaleX(0.85);transform-origin:0 0">0,6494</div><div class="a" style="left:243.29999999999995px;top:39px;white-space:nowrap;font-size:19.5px;color:#f2f2f2;transform:scaleX(0.85);transform-origin:0 0">0,2985</div><div class="a" style="left:321px;top:39px;white-space:nowrap;font-size:19.5px;color:#f2f2f2;transform:scaleX(0.85);transform-origin:0 0">0,1465</div><div class="a" style="left:389.5px;top:39px;white-space:nowrap;font-size:19.5px;color:#f2f2f2;transform:scaleX(0.85);transform-origin:0 0">0,2249</div><div class="a" style="left:467.5px;top:39px;white-space:nowrap;font-size:19.5px;color:#f2f2f2;transform:scaleX(0.85);transform-origin:0 0">0,3208</div><div class="a" style="left:538.5px;top:39px;white-space:nowrap;font-size:19.5px;color:#f2f2f2;transform:scaleX(0.85);transform-origin:0 0">0,4181</div><div class="a" style="left:616px;top:39px;white-space:nowrap;font-size:19.5px;color:#f2f2f2;transform:scaleX(0.85);transform-origin:0 0">0,3127</div><div class="a" style="left:0px;top:65px;width:634px;height:31px;background:linear-gradient(#818181,#737373)"></div><div class="a" style="left:13px;top:70px;white-space:nowrap;font-size:19px;font-weight:bold;color:#f6f6f6;transform:scaleX(0.85);transform-origin:0 0">y: CIE31</div><div class="a" style="left:97.40000000000009px;top:70px;white-space:nowrap;font-size:19.5px;color:#f2f2f2;transform:scaleX(0.85);transform-origin:0 0">0,3329</div><div class="a" style="left:175px;top:70px;white-space:nowrap;font-size:19.5px;color:#f2f2f2;transform:scaleX(0.85);transform-origin:0 0">0,3322</div><div class="a" style="left:243.29999999999995px;top:70px;white-space:nowrap;font-size:19.5px;color:#f2f2f2;transform:scaleX(0.85);transform-origin:0 0">0,6089</div><div class="a" style="left:321px;top:70px;white-space:nowrap;font-size:19.5px;color:#f2f2f2;transform:scaleX(0.85);transform-origin:0 0">0,0563</div><div class="a" style="left:389.5px;top:70px;white-space:nowrap;font-size:19.5px;color:#f2f2f2;transform:scaleX(0.85);transform-origin:0 0">0,3337</div><div class="a" style="left:467.5px;top:70px;white-space:nowrap;font-size:19.5px;color:#f2f2f2;transform:scaleX(0.85);transform-origin:0 0">0,1538</div><div class="a" style="left:538.5px;top:70px;white-space:nowrap;font-size:19.5px;color:#f2f2f2;transform:scaleX(0.85);transform-origin:0 0">0,5111</div><div class="a" style="left:616px;top:70px;white-space:nowrap;font-size:19.5px;color:#f2f2f2;transform:scaleX(0.85);transform-origin:0 0">0,3341</div><div class="a" style="left:0px;top:96px;width:634px;height:31px;background:linear-gradient(#474747,#3b3b3b)"></div><div class="a" style="left:13px;top:101px;white-space:nowrap;font-size:19px;font-weight:bold;color:#f6f6f6;transform:scaleX(0.85);transform-origin:0 0">Y</div><div class="a" style="left:97.40000000000009px;top:101px;white-space:nowrap;font-size:19.5px;color:#f2f2f2;transform:scaleX(0.85);transform-origin:0 0">242,8486</div><div class="a" style="left:175px;top:101px;white-space:nowrap;font-size:19.5px;color:#f2f2f2;transform:scaleX(0.85);transform-origin:0 0">50,0237</div><div class="a" style="left:243.29999999999995px;top:101px;white-space:nowrap;font-size:19.5px;color:#f2f2f2;transform:scaleX(0.85);transform-origin:0 0">175,0507</div><div class="a" style="left:321px;top:101px;white-space:nowrap;font-size:19.5px;color:#f2f2f2;transform:scaleX(0.85);transform-origin:0 0">15,8639</div><div class="a" style="left:389.5px;top:101px;white-space:nowrap;font-size:19.5px;color:#f2f2f2;transform:scaleX(0.85);transform-origin:0 0">191,1629</div><div class="a" style="left:467.5px;top:101px;white-space:nowrap;font-size:19.5px;color:#f2f2f2;transform:scaleX(0.85);transform-origin:0 0">68,1380</div><div class="a" style="left:538.5px;top:101px;white-space:nowrap;font-size:19.5px;color:#f2f2f2;transform:scaleX(0.85);transform-origin:0 0">228,1393</div><div class="a" style="left:616px;top:101px;white-space:nowrap;font-size:19.5px;color:#f2f2f2;transform:scaleX(0.85);transform-origin:0 0">462,4500</div><div class="a" style="left:0px;top:127px;width:634px;height:31px;background:linear-gradient(#818181,#737373)"></div><div class="a" style="left:13px;top:132px;white-space:nowrap;font-size:19px;font-weight:bold;color:#f6f6f6;transform:scaleX(0.85);transform-origin:0 0">Target Y</div><div class="a" style="left:97.40000000000009px;top:132px;white-space:nowrap;font-size:19.5px;color:#f2f2f2;transform:scaleX(0.85);transform-origin:0 0">240,9346</div><div class="a" style="left:175px;top:132px;white-space:nowrap;font-size:19.5px;color:#f2f2f2;transform:scaleX(0.85);transform-origin:0 0">51,2362</div><div class="a" style="left:243.29999999999995px;top:132px;white-space:nowrap;font-size:19.5px;color:#f2f2f2;transform:scaleX(0.85);transform-origin:0 0">172,3064</div><div class="a" style="left:321px;top:132px;white-space:nowrap;font-size:19.5px;color:#f2f2f2;transform:scaleX(0.85);transform-origin:0 0">17,3920</div><div class="a" style="left:389.5px;top:132px;white-space:nowrap;font-size:19.5px;color:#f2f2f2;transform:scaleX(0.85);transform-origin:0 0">189,6984</div><div class="a" style="left:467.5px;top:132px;white-space:nowrap;font-size:19.5px;color:#f2f2f2;transform:scaleX(0.85);transform-origin:0 0">68,6282</div><div class="a" style="left:538.5px;top:132px;white-space:nowrap;font-size:19.5px;color:#f2f2f2;transform:scaleX(0.85);transform-origin:0 0">223,5426</div><div class="a" style="left:616px;top:132px;white-space:nowrap;font-size:19.5px;color:#f2f2f2;transform:scaleX(0.85);transform-origin:0 0">462,4500</div><div class="a" style="left:0px;top:158px;width:634px;height:31px;background:linear-gradient(#474747,#3b3b3b)"></div><div class="a" style="left:13px;top:163px;white-space:nowrap;font-size:19px;font-weight:bold;color:#f6f6f6;transform:scaleX(0.85);transform-origin:0 0">ΔE 2000</div><div class="a" style="left:97.40000000000009px;top:163px;white-space:nowrap;font-size:19.5px;color:#f2f2f2;transform:scaleX(0.85);transform-origin:0 0">2,4796</div><div class="a" style="left:175px;top:163px;white-space:nowrap;font-size:19.5px;color:#f2f2f2;transform:scaleX(0.85);transform-origin:0 0">2,0594</div><div class="a" style="left:243.29999999999995px;top:163px;white-space:nowrap;font-size:19.5px;color:#f2f2f2;transform:scaleX(0.85);transform-origin:0 0">0,7428</div><div class="a" style="left:321px;top:163px;white-space:nowrap;font-size:19.5px;color:#f2f2f2;transform:scaleX(0.85);transform-origin:0 0">0,8731</div><div class="a" style="left:389.5px;top:163px;white-space:nowrap;font-size:19.5px;color:#f2f2f2;transform:scaleX(0.85);transform-origin:0 0">1,2092</div><div class="a" style="left:467.5px;top:163px;white-space:nowrap;font-size:19.5px;color:#f2f2f2;transform:scaleX(0.85);transform-origin:0 0">0,1399</div><div class="a" style="left:538.5px;top:163px;white-space:nowrap;font-size:19.5px;color:#f2f2f2;transform:scaleX(0.85);transform-origin:0 0">1,0271</div><div class="a" style="left:616px;top:163px;white-space:nowrap;font-size:19.5px;color:#f2f2f2;transform:scaleX(0.85);transform-origin:0 0">3,5012</div><div class="a" style="left:0px;top:189px;width:634px;height:31px;background:linear-gradient(#818181,#737373)"></div><div class="a" style="left:13px;top:194px;white-space:nowrap;font-size:19px;font-weight:bold;color:#f6f6f6;transform:scaleX(0.85);transform-origin:0 0">ΔE ITP</div><div class="a" style="left:97.40000000000009px;top:194px;white-space:nowrap;font-size:19.5px;color:#f2f2f2;transform:scaleX(0.85);transform-origin:0 0">1,8681</div><div class="a" style="left:175px;top:194px;white-space:nowrap;font-size:19.5px;color:#f2f2f2;transform:scaleX(0.85);transform-origin:0 0">0,3535</div><div class="a" style="left:243.29999999999995px;top:194px;white-space:nowrap;font-size:19.5px;color:#f2f2f2;transform:scaleX(0.85);transform-origin:0 0">2,0630</div><div class="a" style="left:321px;top:194px;white-space:nowrap;font-size:19.5px;color:#f2f2f2;transform:scaleX(0.85);transform-origin:0 0">0,6570</div><div class="a" style="left:389.5px;top:194px;white-space:nowrap;font-size:19.5px;color:#f2f2f2;transform:scaleX(0.85);transform-origin:0 0">1,7407</div><div class="a" style="left:467.5px;top:194px;white-space:nowrap;font-size:19.5px;color:#f2f2f2;transform:scaleX(0.85);transform-origin:0 0">0,5304</div><div class="a" style="left:538.5px;top:194px;white-space:nowrap;font-size:19.5px;color:#f2f2f2;transform:scaleX(0.85);transform-origin:0 0">2,7630</div><div class="a" style="left:616px;top:194px;white-space:nowrap;font-size:19.5px;color:#f2f2f2;transform:scaleX(0.85);transform-origin:0 0">2,1000</div></div><div class="a" style="left:1629px;top:696px;width:17px;height:170px;background:#4a4a4a;border-radius:6px 6px 0 0"></div><div class="a" style="left:1631px;top:718px;width:13px;height:105px;background:#3b3b3b;border-radius:6px"></div><div class="a" style="left:1630.5px;top:698px;width:14px;height:16px;background:#686868;border-radius:4px"></div><div class="a" style="left:1630.5px;top:848px;width:14px;height:16px;background:#686868;border-radius:4px"></div><svg class="a" style="left:1630px;top:698px" width="15" height="16"><path d="M2.5 12 L12.5 12 L7.5 6.5 Z" fill="#3a3a3a"/></svg><svg class="a" style="left:1630px;top:848px" width="15" height="16"><path d="M2.5 5 L12.5 5 L7.5 10.5 Z" fill="#3a3a3a"/></svg><div class="a" style="left:995px;top:866px;width:634px;height:18px;background:#4a4a4a;border-radius:0 0 0 6px"></div><div class="a" style="left:1014px;top:868px;width:547px;height:15px;background:#3b3b3b;border-radius:7px"></div><div class="a" style="left:997px;top:868px;width:14px;height:15px;background:#686868;border-radius:4px"></div><div class="a" style="left:1613px;top:868px;width:14px;height:15px;background:#686868;border-radius:4px"></div><svg class="a" style="left:997px;top:868px" width="14" height="15"><path d="M10 3 L10 12 L4.5 7.5 Z" fill="#3a3a3a"/></svg><svg class="a" style="left:1613px;top:868px" width="14" height="15"><path d="M4 3 L4 12 L9.5 7.5 Z" fill="#3a3a3a"/></svg><div class="a" style="left:1629px;top:866px;width:17px;height:18px;background:#2e2e2e"></div><div class="a" style="left:1629px;top:662px;width:16.5px;height:34px;background:linear-gradient(#383838,#303030)"></div><div class="a" style="left:1645.5px;top:661px;width:1.5px;height:223px;background:#000"></div><div class="a" style="left:1px;top:929.5px;width:154px;height:75.5px;background:linear-gradient(#9c9c9c 0,#8a8a8a 20%,#6c6c6c 60%,#5a5a5a 100%);border-radius:4px 4px 0 0"></div><div class="a" style="left:7.5px;top:936px;width:141.5px;height:45px;background:#c4c4c4;border-radius:4px;box-shadow:inset 1px 1px 2px rgba(0,0,0,.55);border:1px solid rgba(0,0,0,.18)"></div><div class="a" style="left:0px;top:987.5px;width:155px;text-align:center;font-size:13.5px;font-weight:bold;color:#333">White</div><div class="a" style="left:158px;top:929.5px;width:155px;height:75.5px;background:linear-gradient(#9c9c9c 0,#8a8a8a 20%,#6c6c6c 60%,#5a5a5a 100%);border-radius:4px 4px 0 0"></div><div class="a" style="left:165.5px;top:936px;width:141.5px;height:45px;background:#bb0000;border-radius:4px;box-shadow:inset 1px 1px 2px rgba(0,0,0,.55);border:1px solid rgba(0,0,0,.18)"></div><div class="a" style="left:158px;top:987.5px;width:155px;text-align:center;font-size:13.5px;font-weight:bold;color:#333">Red</div><div class="a" style="left:316px;top:929.5px;width:155px;height:75.5px;background:linear-gradient(#9c9c9c 0,#8a8a8a 20%,#6c6c6c 60%,#5a5a5a 100%);border-radius:4px 4px 0 0"></div><div class="a" style="left:323.5px;top:936px;width:141.5px;height:45px;background:#00bb00;border-radius:4px;box-shadow:inset 1px 1px 2px rgba(0,0,0,.55);border:1px solid rgba(0,0,0,.18)"></div><div class="a" style="left:316px;top:987.5px;width:155px;text-align:center;font-size:13.5px;font-weight:bold;color:#333">Green</div><div class="a" style="left:474px;top:929.5px;width:155px;height:75.5px;background:linear-gradient(#9c9c9c 0,#8a8a8a 20%,#6c6c6c 60%,#5a5a5a 100%);border-radius:4px 4px 0 0"></div><div class="a" style="left:481.5px;top:936px;width:141.5px;height:45px;background:#0000bb;border-radius:4px;box-shadow:inset 1px 1px 2px rgba(0,0,0,.55);border:1px solid rgba(0,0,0,.18)"></div><div class="a" style="left:474px;top:987.5px;width:155px;text-align:center;font-size:13.5px;font-weight:bold;color:#333">Blue</div><div class="a" style="left:632px;top:929.5px;width:155px;height:75.5px;background:linear-gradient(#9c9c9c 0,#8a8a8a 20%,#6c6c6c 60%,#5a5a5a 100%);border-radius:4px 4px 0 0"></div><div class="a" style="left:639.5px;top:936px;width:141.5px;height:45px;background:#00bbbb;border-radius:4px;box-shadow:inset 1px 1px 2px rgba(0,0,0,.55);border:1px solid rgba(0,0,0,.18)"></div><div class="a" style="left:632px;top:987.5px;width:155px;text-align:center;font-size:13.5px;font-weight:bold;color:#333">Cyan</div><div class="a" style="left:790px;top:929.5px;width:155px;height:75.5px;background:linear-gradient(#9c9c9c 0,#8a8a8a 20%,#6c6c6c 60%,#5a5a5a 100%);border-radius:4px 4px 0 0"></div><div class="a" style="left:797.5px;top:936px;width:141.5px;height:45px;background:#bb00bb;border-radius:4px;box-shadow:inset 1px 1px 2px rgba(0,0,0,.55);border:1px solid rgba(0,0,0,.18)"></div><div class="a" style="left:790px;top:987.5px;width:155px;text-align:center;font-size:13.5px;font-weight:bold;color:#333">Magenta</div><div class="a" style="left:948px;top:929.5px;width:155px;height:75.5px;background:linear-gradient(#9c9c9c 0,#8a8a8a 20%,#6c6c6c 60%,#5a5a5a 100%);border-radius:4px 4px 0 0"></div><div class="a" style="left:955.5px;top:936px;width:141.5px;height:45px;background:#c0c000;border-radius:4px;box-shadow:inset 1px 1px 2px rgba(0,0,0,.55);border:1px solid rgba(0,0,0,.18)"></div><div class="a" style="left:948px;top:987.5px;width:155px;text-align:center;font-size:13.5px;font-weight:bold;color:#333">Yellow</div><div class="a" style="left:1106px;top:929.5px;width:155px;height:75.5px;background:linear-gradient(#232323,#2a2a2a);border-radius:4px 4px 0 0"></div><div class="a" style="left:1113.5px;top:936px;width:141.5px;height:45px;background:#ffffff;border-radius:4px;box-shadow:inset 1px 1px 2px rgba(0,0,0,.55)"></div><div class="a" style="left:1106px;top:987.5px;width:155px;text-align:center;font-size:13.5px;font-weight:bold;color:#fff">100W</div><div class="a" style="left:0;top:1px;width:114px;height:37px;background:linear-gradient(#404040,#353535);border-radius:0 8px 0 0;border-top:1px solid #777;border-right:1.5px solid #8a8a8a"></div><div class="a" style="left:72px;top:2px;width:1px;height:35px;background:#8a8a8a"></div><div class="a" style="left:7px;top:12px;white-space:nowrap;font-size:14.5px;color:#f0f0f0">History 1</div><div class="a" style="left:80px;top:9px;width:24px;height:24px;border-radius:50%;background:radial-gradient(circle at 50% 45%,#3a3a3a,#444 70%,#4a4a4a)"></div><div class="a" style="left:87.5px;top:13px;white-space:nowrap;font-size:13px;color:#999">+</div><div class="a" style="left:1054px;top:0;width:178px;height:37px;background:linear-gradient(#4e4e4e,#6c6c6c);border-radius:0 6px 0 0"></div><div class="a" style="left:1054px;top:0.5px;width:7.5px;height:36.5px;background:#10e010;border-radius:6px 0 0 0"></div><div class="a" style="left:1065px;top:2px;white-space:nowrap;font-size:13.5px;color:#f2f2f2">X-Rite i1Pro 3</div><div class="a" style="left:1065px;top:21px;white-space:nowrap;font-size:13.5px;color:#f2f2f2">Direct View</div><div class="a" style="left:1151px;top:6px;width:24px;height:25px;border-radius:50%;background:linear-gradient(#454545,#747474);box-shadow:0 0 2px rgba(0,0,0,.25)"></div><svg class="a" style="left:1155px;top:15px" width="16" height="10"><path d="M1.5 2 L14.5 2 L8 8.5 Z" fill="#fff"/></svg><div class="a" style="left:1187px;top:3px;width:1px;height:34px;background:#3a3a3a"></div><div class="a" style="left:1197px;top:2px;width:33px;height:33px;border-radius:50%;background:#0000ee;border:2px solid #d0d0ff"></div><div class="a" style="left:1197.5px;top:12px;width:33px;text-align:center;font-size:11.5px;font-weight:bold;color:#fff">678</div><div class="a" style="left:1240px;top:0;width:162px;height:37px;background:linear-gradient(#4e4e4e,#6c6c6c);border-radius:0 6px 0 0"></div><div class="a" style="left:1240px;top:0.5px;width:7.5px;height:36.5px;background:#10e010;border-radius:6px 0 0 0"></div><div class="a" style="left:1251px;top:2px;white-space:nowrap;font-size:13.5px;color:#f2f2f2">Mobile Forge</div><div class="a" style="left:1370px;top:6px;width:24px;height:25px;border-radius:50%;background:linear-gradient(#454545,#747474);box-shadow:0 0 2px rgba(0,0,0,.25)"></div><svg class="a" style="left:1374px;top:15px" width="16" height="10"><path d="M1.5 2 L14.5 2 L8 8.5 Z" fill="#fff"/></svg><div class="a" style="left:1410px;top:0;width:179px;height:37px;background:linear-gradient(#4e4e4e,#6c6c6c);border-radius:0 6px 0 0"></div><div class="a" style="left:1410px;top:0.5px;width:7.5px;height:36.5px;background:#f0f000;border-radius:6px 0 0 0"></div><div class="a" style="left:1421px;top:2px;white-space:nowrap;font-size:13.5px;color:#f2f2f2">Direct Display Control</div><div class="a" style="left:1557px;top:6px;width:24px;height:25px;border-radius:50%;background:linear-gradient(#454545,#747474);box-shadow:0 0 2px rgba(0,0,0,.25)"></div><svg class="a" style="left:1561px;top:15px" width="16" height="10"><path d="M1.5 2 L14.5 2 L8 8.5 Z" fill="#fff"/></svg><div class="a" style="left:1593px;top:-0.5px;width:42px;height:35.5px;background:linear-gradient(#8a8a8a,#5e5e5e);border:1.5px solid #c4c4c4;border-radius:6px"></div><div class="a" style="left:1602px;top:5.5px;width:24px;height:24px;border-radius:50%;background:linear-gradient(#5a5a5a,#8c8c8c)"></div><svg class="a" style="left:1596px;top:0" width="36" height="36"><path d="M26.10 16.09 L26.10 18.71 L23.80 18.94 L23.19 20.41 L24.65 22.20 L22.80 24.05 L21.01 22.59 L19.54 23.20 L19.31 25.50 L16.69 25.50 L16.46 23.20 L14.99 22.59 L13.20 24.05 L11.35 22.20 L12.81 20.41 L12.20 18.94 L9.90 18.71 L9.90 16.09 L12.20 15.86 L12.81 14.39 L11.35 12.60 L13.20 10.75 L14.99 12.21 L16.46 11.60 L16.69 9.30 L19.31 9.30 L19.54 11.60 L21.01 12.21 L22.80 10.75 L24.65 12.60 L23.19 14.39 L23.80 15.86 Z M22 17.4 A4 4 0 1 0 14 17.4 A4 4 0 1 0 22 17.4 Z" fill="#d0d0d0" fill-rule="evenodd"/></svg><div class="a" style="left:1636px;top:-0.5px;width:40px;height:35.5px;background:linear-gradient(#8a8a8a,#5e5e5e);border:1.5px solid #c4c4c4;border-radius:6px"></div><div class="a" style="left:1640.5px;top:5.5px;width:24px;height:24px;border-radius:50%;background:linear-gradient(#5a5a5a,#8c8c8c)"></div><svg class="a" style="left:1645px;top:8px" width="14" height="20"><path d="M11.5 2 L11.5 15.5 L4 9 Z" fill="#f4f4f4"/></svg><div class="a" style="left:1659px;top:0px;width:9px;height:1005px;background:linear-gradient(90deg,rgba(0,0,0,0),rgba(0,0,0,.55))"></div><div class="a" style="left:1265px;top:929px;width:60px;height:23px;background:linear-gradient(#a8a8a8 0,#9a9a9a 30%,#7a7a7a 70%,#6a6a6a 100%);border-radius:5px 5px 0 0"></div><div class="a" style="left:1265px;top:953px;width:60px;height:52px;background:linear-gradient(#8a8a8a,#6a6a6a)"></div><div class="a" style="left:1276px;top:960px;width:38px;height:38px;border:3px solid #111;border-radius:7px;background:linear-gradient(#b0b0b0 0,#a0a0a0 48%,#8a8a8a 52%,#909090 100%)"></div><div class="a" style="left:1287px;top:971px;width:17px;height:17px;background:linear-gradient(#1a1a1a 0,#1a1a1a 45%,#000 55%)"></div><div class="a" style="left:1285px;top:932px;width:19px;height:19px;border-radius:50%;background:linear-gradient(#777,#aaa)"></div><svg class="a" style="left:1287px;top:934px" width="16" height="14"><path d="M2 10 L14 10 L8 4 Z" fill="#333"/></svg><div class="a" style="left:1326px;top:929px;width:58px;height:38px;background:linear-gradient(#a8a8a8 0,#9a9a9a 30%,#7a7a7a 70%,#6a6a6a 100%)"></div><div class="a" style="left:1342.5px;top:935px;width:25px;height:25px;border-radius:50%;background:linear-gradient(#7a7a7a,#a4a4a4)"></div><div class="a" style="left:1385px;top:929px;width:55px;height:38px;background:linear-gradient(#a8a8a8 0,#9a9a9a 30%,#7a7a7a 70%,#6a6a6a 100%)"></div><div class="a" style="left:1400.0px;top:935px;width:25px;height:25px;border-radius:50%;background:linear-gradient(#7a7a7a,#a4a4a4)"></div><div class="a" style="left:1441px;top:929px;width:56px;height:38px;background:linear-gradient(#a8a8a8 0,#9a9a9a 30%,#7a7a7a 70%,#6a6a6a 100%)"></div><div class="a" style="left:1456.5px;top:935px;width:25px;height:25px;border-radius:50%;background:linear-gradient(#7a7a7a,#a4a4a4)"></div><div class="a" style="left:1498px;top:929px;width:55px;height:38px;background:linear-gradient(#a8a8a8 0,#9a9a9a 30%,#7a7a7a 70%,#6a6a6a 100%)"></div><div class="a" style="left:1513.0px;top:935px;width:25px;height:25px;border-radius:50%;background:linear-gradient(#7a7a7a,#a4a4a4)"></div><div class="a" style="left:1554px;top:929px;width:55px;height:38px;background:linear-gradient(#a8a8a8 0,#9a9a9a 30%,#7a7a7a 70%,#6a6a6a 100%)"></div><div class="a" style="left:1569.0px;top:935px;width:25px;height:25px;border-radius:50%;background:linear-gradient(#7a7a7a,#a4a4a4)"></div><svg class="a" style="left:1343.0px;top:936px" width="24" height="24"><rect x="7" y="7" width="10" height="10" fill="#333"/></svg><svg class="a" style="left:1400.5px;top:936px" width="24" height="24"><path d="M8.5 5.5 L18.5 12 L8.5 18.5 Z" fill="#333"/></svg><svg class="a" style="left:1457.0px;top:936px" width="24" height="24"><path d="M7 6 L5 6 L5 18 L7 18 M17 6 L19 6 L19 18 L17 18" stroke="#333" stroke-width="2" fill="none"/><circle cx="10" cy="12" r="1" fill="#333"/><circle cx="14" cy="12" r="1" fill="#333"/></svg><svg class="a" style="left:1513.5px;top:936px" width="24" height="24"><path d="M12 12 C9 8 5 8 5 12 C5 16 9 16 12 12 C15 8 19 8 19 12 C19 16 15 16 12 12 Z" stroke="#333" stroke-width="2.2" fill="none"/></svg><svg class="a" style="left:1569.5px;top:936px" width="24" height="24"><path d="M6.5 13 A5.5 5.5 0 0 1 16 8.5 M17.5 11 A5.5 5.5 0 0 1 8 15.5" stroke="#333" stroke-width="2.2" fill="none"/><path d="M14 5.5 L18.5 6 L17.5 10.5 Z M10 18.5 L5.5 18 L6.5 13.5 Z" fill="#333"/></svg><div class="a" style="left:1384px;top:929px;width:1px;height:38px;background:#2a2a2a"></div><div class="a" style="left:1440px;top:929px;width:1px;height:38px;background:#2a2a2a"></div><div class="a" style="left:1497px;top:929px;width:1px;height:38px;background:#2a2a2a"></div><div class="a" style="left:1553px;top:929px;width:1px;height:38px;background:#2a2a2a"></div><div class="a" style="left:1326px;top:968px;width:171px;height:37px;background:linear-gradient(#a8a8a8 0,#9a9a9a 30%,#7a7a7a 70%,#6a6a6a 100%)"></div><div class="a" style="left:1498px;top:968px;width:170px;height:37px;background:linear-gradient(#a8a8a8 0,#9a9a9a 30%,#7a7a7a 70%,#6a6a6a 100%)"></div><div class="a" style="left:1353px;top:975px;width:25px;height:25px;border-radius:50%;background:linear-gradient(#7a7a7a,#a4a4a4)"></div><div class="a" style="left:1619px;top:975px;width:25px;height:25px;border-radius:50%;background:linear-gradient(#7a7a7a,#a4a4a4)"></div><svg class="a" style="left:1353px;top:975px" width="25" height="25"><path d="M12 7 L7 12.5 L12 18 M17 7 L12 12.5 L17 18" stroke="#333" stroke-width="2" fill="none"/></svg><svg class="a" style="left:1619px;top:975px" width="25" height="25"><path d="M8 7 L13 12.5 L8 18 M13 7 L18 12.5 L13 18" stroke="#333" stroke-width="2" fill="none"/></svg><div class="a" style="left:1397px;top:972px;white-space:nowrap;font-size:27px;color:#333;-webkit-text-stroke:0.7px #333;letter-spacing:1.6px">Back</div><div class="a" style="left:1531px;top:972.5px;white-space:nowrap;font-size:27px;color:#333;-webkit-text-stroke:0.7px #333;letter-spacing:3.3px">Next</div><svg class="a" style="left:1618px;top:928px" width="38" height="38"><g transform="translate(18,19)" fill="#e81212" style="filter:drop-shadow(1.5px 1.5px 1.5px rgba(0,0,0,.8))"><rect x="-3.3" y="-16.5" width="6.6" height="16.5" rx="1" transform="rotate(0)"/><rect x="-3.3" y="-16.5" width="6.6" height="16.5" rx="1" transform="rotate(60)"/><rect x="-3.3" y="-16.5" width="6.6" height="16.5" rx="1" transform="rotate(120)"/><rect x="-3.3" y="-16.5" width="6.6" height="16.5" rx="1" transform="rotate(180)"/><rect x="-3.3" y="-16.5" width="6.6" height="16.5" rx="1" transform="rotate(240)"/><rect x="-3.3" y="-16.5" width="6.6" height="16.5" rx="1" transform="rotate(300)"/></g></svg>
<svg class="a" style="left:0;top:0" width="1668" height="1005"><text x="423.3" y="624.5" font-size="13.3" fill="#f0f0f0" text-anchor="middle">White</text><text x="495.5" y="624.5" font-size="13.3" fill="#f0f0f0" text-anchor="middle">Red</text><text x="567.6" y="624.5" font-size="13.3" fill="#f0f0f0" text-anchor="middle">Green</text><text x="639.8" y="624.5" font-size="13.3" fill="#f0f0f0" text-anchor="middle">Blue</text><text x="712.0" y="624.5" font-size="13.3" fill="#f0f0f0" text-anchor="middle">Cyan</text><text x="784.2" y="624.5" font-size="13.3" fill="#f0f0f0" text-anchor="middle">Magenta</text><text x="856.3" y="624.5" font-size="13.3" fill="#f0f0f0" text-anchor="middle">Yellow</text><text x="928.5" y="624.5" font-size="13.3" fill="#f0f0f0" text-anchor="middle">100W</text><text transform="translate(387,506) rotate(-90)" font-size="12" fill="#e8e8e8" text-anchor="middle">Actual</text><text transform="translate(387,582) rotate(-90)" font-size="12" fill="#e8e8e8" text-anchor="middle">Target</text><rect x="799.5" y="768.5" width="14" height="14" fill="#fff" stroke="#000" stroke-width="2.4"/><circle cx="807" cy="760.5" r="4.6" fill="#c0c0c0" stroke="#222" stroke-width="1.2"/><circle cx="812" cy="755.2" r="4.6" fill="#ffffff" stroke="#222" stroke-width="1.2"/></svg>
</body></html>
